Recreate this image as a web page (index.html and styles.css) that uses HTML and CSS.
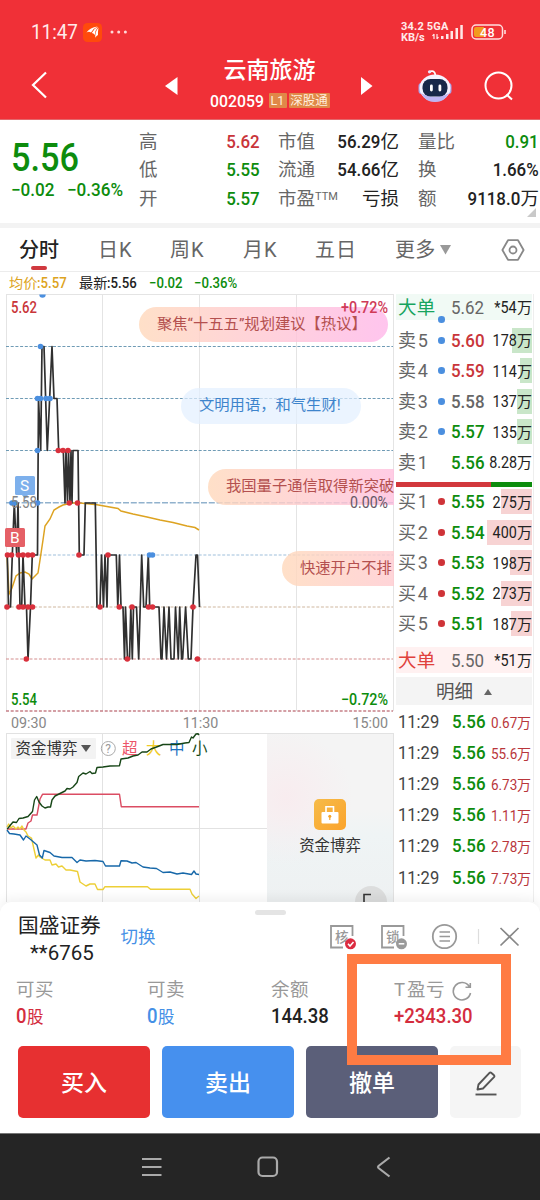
FILE: index.html
```html
<!DOCTYPE html>
<html lang="zh-CN">
<head>
<meta charset="utf-8">
<title>云南旅游 002059</title>
<link rel="stylesheet" href="styles.css">
</head>
<body>
<div class="app">
  <header class="top">
    <div class="status">
      <span class="clock num">11:47</span>
      <svg class="appicon" width="19" height="19" viewBox="0 0 19 19"><rect width="19" height="19" rx="4.5" fill="#ff4a0c"/><path d="M3.500 9.500Q7 4.500 14.500 3.500Q10 5.500 8 9.500Q6 7.800 3.500 9.500M8.800 10Q11 5.500 15 3.800Q12 7.500 11.800 12Q10.500 10 8.800 10M12.300 14.800Q11.800 9 15.500 4.500Q14.800 9 15 12Q13.500 12.500 12.300 14.800" fill="#fff"/></svg>
      <svg class="more" width="18" height="4" viewBox="0 0 18 4" fill="#ffd9d9"><circle cx="2" cy="2" r="1.500"/><circle cx="8.700" cy="2" r="1.500"/><circle cx="15.400" cy="2" r="1.500"/></svg>
      <div class="net"><div>34.2 5GA</div><div>KB/s</div></div>
      <svg class="signal" width="32" height="16" viewBox="0 0 32 16" fill="#ffe6e6"><path d="M2 10v5M5 10v5M0.500 12l1.500-2M6.500 13l-1.500 2" stroke="#ffe6e6" stroke-width="1.200"/><rect x="9" y="12" width="2.500" height="3"/><rect x="14" y="10" width="2.500" height="5"/><rect x="18.500" y="7" width="2.500" height="8"/><rect x="23.500" y="4" width="2.500" height="11"/><rect x="28.300" y="1" width="2.500" height="14"/></svg>
      <svg class="battery" width="36" height="16" viewBox="0 0 36 16"><rect x="1" y="1" width="30.500" height="14" rx="4" fill="none" stroke="#ffdede" stroke-width="1.500"/><path d="M5 3h8v10H5a2 2 0 0 1-2-2V5a2 2 0 0 1 2-2" fill="#f29a1d"/><path d="M34 6v4" stroke="#ffdede" stroke-width="1.600"/><text x="9" y="12.500" font-size="12.500" font-weight="500" fill="#fff" textLength="14.500">48</text></svg>
    </div>
    <div class="titlebar">
      <svg class="ic-back" width="16" height="28" viewBox="0 0 16 28" fill="none" stroke="#fff" stroke-width="2.200"><path d="M15 1.500 2 14 15 26.500"/></svg>
      <svg class="ic-prev" width="13" height="18" viewBox="0 0 13 18"><path d="M12.500 0V18L0 9Z" fill="#fff"/></svg>
      <div class="title">
        <h1>云南旅游</h1>
        <div class="code"><span class="num">002059</span><b class="l1">L1</b><b class="sgt">深股通</b></div>
      </div>
      <svg class="ic-next" width="12" height="18" viewBox="0 0 12 18"><path d="M0 0V18L11.500 9Z" fill="#fff"/></svg>
      <svg class="ic-bot" width="36" height="34" viewBox="0 0 36 34"><path d="M12 3q6-3 6.500 4" fill="none" stroke="#fff" stroke-width="1.800"/><circle cx="12.500" cy="2.800" r="1.600" fill="#e9e6ff"/><rect x="1.500" y="14" width="6" height="11" rx="3" fill="#a9a4ea"/><rect x="28.500" y="14" width="6" height="11" rx="3" fill="#a9a4ea"/><ellipse cx="18" cy="19" rx="15.500" ry="13.500" fill="#f5f3ff"/><path d="M4 24q14 8 28 0-4 9-14 9T4 24" fill="#bdb5f3"/><rect x="5.500" y="10" width="25" height="17.500" rx="8" fill="#172748"/><rect x="13" y="15.500" width="2.800" height="7" rx="1.400" fill="#fff"/><rect x="21.500" y="15.500" width="2.800" height="7" rx="1.400" fill="#fff"/></svg>
      <svg class="ic-search" width="30" height="30" viewBox="0 0 30 30" fill="none" stroke="#fff" stroke-width="2"><circle cx="14.500" cy="14.500" r="13"/><path d="M22.500 23.500 28 28.500"/></svg>
    </div>
  </header>

  <section class="quote">
    <div class="now">
      <div class="price num">5.56</div>
      <div class="chg"><span class="num">−0.02</span><span class="num">−0.36%</span></div>
    </div>
    <dl class="kv c1"><dt>高</dt><dd class="red"><i>5.62</i></dd><dt>低</dt><dd class="green"><i>5.55</i></dd><dt>开</dt><dd class="green"><i>5.57</i></dd></dl>
    <dl class="kv c2"><dt>市值</dt><dd><i>56.29</i>亿</dd><dt>流通</dt><dd><i>54.66</i>亿</dd><dt>市盈<sup>TTM</sup></dt><dd>亏损</dd></dl>
    <dl class="kv c3"><dt>量比</dt><dd class="green"><i>0.91</i></dd><dt>换</dt><dd><i>1.66%</i></dd><dt>额</dt><dd><i>9118.0</i>万</dd></dl>
    <svg class="corner" width="9" height="9" viewBox="0 0 9 9"><path d="M9 0V9H0Z" fill="#c9c9c9"/></svg>
  </section>

  <nav class="tabs">
    <span class="on">分时</span><span>日K</span><span>周K</span><span>月K</span><span>五日</span>
    <span class="drop">更多<svg width="11" height="10" viewBox="0 0 11 10"><path d="M0 0H11L5.500 9.500Z" fill="#999"/></svg></span>
    <svg class="gear" width="24" height="22" viewBox="0 0 24 22" fill="none" stroke="#888" stroke-width="1.800"><path d="M7 1.200H17L22.600 11 17 20.800H7L1.400 11Z" stroke-linejoin="round"/><circle cx="12" cy="11" r="3.500"/></svg>
  </nav>

  <div class="info">
    <span class="avg">均价<i>:5.57</i></span><span class="last">最新<i>:5.56</i></span><span class="green d1"><i>−0.02</i></span><span class="green"><i>−0.36%</i></span>
  </div>

  <main class="body">
    <div class="charts">
      <div class="main-chart">
        <svg width="394" height="418" viewBox="0 294 394 418">
          <g stroke="#e4e4e4" fill="none"><path d="M6 294.500H394M6.500 294V711M102.500 294V711M199.500 294V711M296.500 294V711M393.500 294V711"/></g>
          <g stroke-dasharray="3 1.700" stroke-width="1.200" fill="none">
            <path d="M6 346.500H393M6 398.500H393M6 450.500H393" stroke="#6f9bb5"/>
            <path d="M6 502.800H393" stroke="#91b2cd" stroke-width="1.600" stroke-dasharray="6 1.800"/>
            <path d="M6 555H393" stroke="#9fc0dc"/><path d="M6 607H393" stroke="#cfb79f"/>
            <path d="M6 659H393" stroke="#d48e8e"/><path d="M6 711H393" stroke="#c68088" stroke-width="1.600"/>
          </g>
          <path d="M7 555 9 594 12 588 16 576 20 573 25 572 29 574 32 579 35 576 38 573 40 560 43 540 45 526 50 519 54 510 59 507 63 505 72 503 80 503 97 504.700 118 508.500 121 511 133 514 147 517 160 520 173 522.500 187 526 195 527.500 199 530" fill="none" stroke="#dda321" stroke-width="1.500"/>
          <path d="M7.300 555 8.500 607H10.500L12.300 555 14.300 503 16.700 555 18 503 20 607H21.700L23 555 25 607H26.500L28 659 30.500 607 32.300 555H37.500L38.500 398.500 40.700 450.500 42 346.500H44L47.300 450.500 52 346.500 54 398.500H57L58.700 450.500H63.300L65 503 66 450.500 67.500 503 68.500 450.500 70 503 71 450.500 72 503 73 450.500H78L79.300 555H84L85.300 503H95.300L97 607H100L101.500 555 103.500 607 105 555 107 607 108 555H116.300L117.800 607 119.500 555 121 607H123L124.500 659 125.500 607 127.500 659H129.500L130.800 607 132.300 659 133.500 607H136.500L138.700 659 141.700 555 143.700 607H146L148.300 555 149.700 607H159L161 659H162L164 607 166.500 659 169 607 171 659H174L175.500 607 178.300 659 179.700 607 181.600 659H182.600L185.600 607 188.300 659H191L193 607 196 555H197.500L199.500 607" fill="none" stroke="#303030" stroke-width="1.700" stroke-linejoin="round"/>
          <g fill="#4b8fdf"><path d="M39.300 294.500h6.400a3.200 3.200 0 0 1-6.400 0"/><circle cx="40.500" cy="346.500" r="2.800"/><circle cx="37.500" cy="398.500" r="2.800"/><circle cx="40.500" cy="398.500" r="2.800"/><circle cx="46" cy="398.500" r="2.800"/><circle cx="50" cy="398.500" r="2.800"/><circle cx="37.500" cy="450.500" r="2.800"/><circle cx="12" cy="503" r="2.800"/><circle cx="15" cy="503" r="2.800"/><circle cx="37.500" cy="503" r="2.800"/><circle cx="149.500" cy="555" r="2.800"/><circle cx="152.500" cy="555" r="2.800"/></g>
          <g fill="#d9303c"><circle cx="58.300" cy="450.500" r="2.800"/><circle cx="63" cy="450.500" r="2.800"/><circle cx="68" cy="450.500" r="2.800"/><circle cx="69.300" cy="503" r="2.800"/><circle cx="77.500" cy="503" r="2.800"/><circle cx="79" cy="555" r="2.800"/><circle cx="7.500" cy="555" r="2.800"/><circle cx="11.500" cy="555" r="2.800"/><circle cx="18.500" cy="555" r="2.800"/><circle cx="23" cy="555" r="2.800"/><circle cx="28" cy="555" r="2.800"/><circle cx="32.500" cy="555" r="2.800"/><circle cx="108" cy="555" r="2.800"/><circle cx="7" cy="607" r="2.800"/><circle cx="19" cy="607" r="2.800"/><circle cx="23" cy="607" r="2.800"/><circle cx="28" cy="607" r="2.800"/><circle cx="32.500" cy="607" r="2.800"/><circle cx="100" cy="607" r="2.800"/><circle cx="119.300" cy="607" r="2.800"/><circle cx="132" cy="607" r="2.800"/><circle cx="148.500" cy="607" r="2.800"/><circle cx="152.500" cy="607" r="2.800"/><circle cx="193" cy="607" r="2.800"/><circle cx="26.300" cy="659" r="2.800"/><circle cx="127.300" cy="659" r="2.800"/><circle cx="197.500" cy="659" r="2.800"/></g>
        </svg>
        <div class="pill p1">聚焦“十五五”规划建议【热议】</div>
        <div class="pill p2">文明用语，和气生财!</div>
        <div class="pill p3">我国量子通信取得新突破</div>
        <div class="pill p4">快速开户不排</div>
        <svg class="labels" width="394" height="418" viewBox="0 294 394 418" font-size="16" font-weight="500">
          <path d="M16.500 476h17a1.500 1.500 0 0 1 1.500 1.500v16a1.500 1.500 0 0 1-1.500 1.500h-5.500l-3 4-3-4h-5.500a1.500 1.500 0 0 1-1.500-1.500v-16a1.500 1.500 0 0 1 1.500-1.500" fill="#7db0ec"/><text x="20" y="491.300" font-size="15.500" fill="#fff" font-weight="400">S</text>
          <rect x="5" y="528" width="20" height="19" rx="1.500" fill="#e56066"/><text x="10" y="543" font-size="15.500" fill="#fff" font-weight="400">B</text>
          <text x="11" y="312.800" textLength="26" lengthAdjust="spacingAndGlyphs" fill="#c9353a">5.62</text>
          <text x="341" y="312.800" textLength="47" lengthAdjust="spacingAndGlyphs" fill="#d03a58">+0.72%</text>
          <text x="11" y="507.800" textLength="26" lengthAdjust="spacingAndGlyphs" fill="#858585" font-weight="400">5.58</text>
          <text x="350" y="507.800" textLength="38" lengthAdjust="spacingAndGlyphs" fill="#675866" font-weight="400">0.00%</text>
          <text x="11" y="704.800" textLength="26" lengthAdjust="spacingAndGlyphs" fill="#0d8c0d">5.54</text>
          <text x="341" y="704.800" textLength="47" lengthAdjust="spacingAndGlyphs" fill="#0d8c0d">−0.72%</text>
        </svg>
      </div>
      <div class="axis"><span>09:30</span><span>11:30</span><span>15:00</span></div>
      <div class="sub-chart">
        <svg width="394" height="169" viewBox="0 733 394 169" fill="none">
          <path d="M6 733.500H394M6.500 733V902M102.500 733V902M199.500 733V902M6 828.500H267M393.500 733V902" stroke="#e2e2e2"/>
          <rect x="11" y="738" width="85" height="21" rx="1" fill="#f3f3f3"/>
          <g font-size="15.500"><text x="15.500" y="754" fill="#333" textLength="62">资金博弈</text><path d="M81 745h10l-5 7Z" fill="#555"/><circle cx="108.300" cy="748.500" r="7" stroke="#aaa"/><text x="105.200" y="753" font-size="12" fill="#999">?</text>
          <text x="122" y="754" fill="#ec5468">超</text><text x="146" y="754" fill="#f0cb28">大</text><text x="169" y="754" fill="#1d72bf">中</text><text x="192" y="754" fill="#164a18">小</text></g>
          <g stroke-width="1.400" stroke-linejoin="round">
            <path d="M7 829H26L28 823 31 821 32.500 815H37L40 799 42.500 794.300H119.500L121.300 806.700H199" stroke="#db4d63"/>
            <path d="M7 827 8.700 824 11 828 13 826 16 829 18 827 20 829 22 826 24 830 26 832 28 836 31.500 838 33.500 847 36 858 38.500 855 40 857 45 860H50L52 865 56 864 58.500 867 62 866 66 870 70 870 77.500 871.500 80 882 83 884 86 886 90 884 95 884 97.500 889.500H103L105 886.700H147.500L150.500 889.300H190L192 894 196 898.500 199 896" stroke="#edcf37"/>
            <path d="M7 830 9.500 833.500 14 834 20 835 23.500 840 26 836 30 839 33.500 842 37 845 39.500 855 42.300 858 44 850.500 50 852.500 54 856 62 857.500 72 857.500 77 862.500 80 860 86 861 95 860.500 103 861.500 105.500 866H119.500L121 860.700 127 861 132 863 136 862.500 143 867 150 868 156.500 868.500 163 872.500 170 872 177 874 183 873 191.500 874.500 194 871 196 874 199 874.500" stroke="#1768a9"/>
            <path d="M7.300 829 10.500 825 13 822 16.500 822.500 19 818.500 23 818 28 816.500 32.500 811.500 34.500 800 36.700 796.500 39 802 42 806 45 808 48 807 50.500 807 52 800 55 796 60 793.500 65 791 67 788.500 70 789 73 787 77 782.500 78.700 776.500 83 773 86 774 90 771.500 92 773.500 95.500 773 97 767.500 103 767 110 766 119.500 765.700 121 759 128 758 133 756 138 755 142 752 147 752 151 749 156.500 747 163 744.500 177 744.500 185 743 189 742.500 191.500 737 193 738 196 734 198 733.700 199 735" stroke="#174617"/>
          </g>
        </svg>
        <div class="locked">
          <svg width="32" height="31" viewBox="0 0 32 31"><defs><linearGradient id="gold" x2="1" y2="1"><stop stop-color="#f6bb49"/><stop offset="1" stop-color="#fba32b"/></linearGradient></defs><rect width="32" height="31" rx="5" fill="url(#gold)"/><path d="M12 14V7.800h7.500V14" fill="none" stroke="#fff" stroke-width="1.600"/><rect x="7.500" y="13" width="17" height="11.500" rx="1" fill="#fff"/><circle cx="15.800" cy="17.200" r="1.500" fill="#f5a52d"/><path d="M15.800 17v4" stroke="#f5a52d" stroke-width="1.200"/></svg>
          <span>资金博弈</span>
          <svg class="expand" width="32" height="16" viewBox="0 0 32 16"><circle cx="16" cy="16" r="16" fill="#dcdddd"/><path d="M9 16V8.500H16" fill="none" stroke="#333" stroke-width="1.600"/></svg>
        </div>
      </div>
    </div>

    <aside class="book">
      <div class="big g"><b>大单</b><em>5.62</em><span><i>*54</i>万</span></div>
      <div class="row"><b>卖5</b><u class="bl"></u><em class="red">5.60</em><span><s class="s5"></s><i>178</i>万</span></div>
      <div class="row"><b>卖4</b><u class="bl"></u><em class="red">5.59</em><span><s class="s4"></s><i>114</i>万</span></div>
      <div class="row"><b>卖3</b><u class="bl"></u><em>5.58</em><span><s class="s3"></s><i>137</i>万</span></div>
      <div class="row"><b>卖2</b><u class="bl"></u><em class="green">5.57</em><span><s class="s2"></s><i>135</i>万</span></div>
      <div class="row"><b>卖1</b><u></u><em class="green">5.56</em><span><i>8.28</i>万</span></div>
      <div class="ratio"></div>
      <div class="row"><b>买1</b><u class="rd"></u><em class="green">5.55</em><span><s class="b1"></s><i>275</i>万</span></div>
      <div class="row"><b>买2</b><u class="rd"></u><em class="green">5.54</em><span><s class="b2"></s><i>400</i>万</span></div>
      <div class="row"><b>买3</b><u class="rd"></u><em class="green">5.53</em><span><s class="b3"></s><i>198</i>万</span></div>
      <div class="row"><b>买4</b><u class="rd"></u><em class="green">5.52</em><span><s class="b4"></s><i>273</i>万</span></div>
      <div class="row"><b>买5</b><u class="rd"></u><em class="green">5.51</em><span><s class="b5"></s><i>187</i>万</span></div>
      <div class="big r"><b>大单</b><em>5.50</em><span><i>*51</i>万</span></div>
      <div class="detail">明细<svg width="8" height="6" viewBox="0 0 8 6"><path d="M4 0 8 6H0Z" fill="#666"/></svg></div>
      <div class="tick"><time>11:29</time><em>5.56</em><span><i>0.67</i>万</span></div>
      <div class="tick"><time>11:29</time><em>5.56</em><span><i>55.6</i>万</span></div>
      <div class="tick"><time>11:29</time><em>5.56</em><span><i>6.73</i>万</span></div>
      <div class="tick"><time>11:29</time><em>5.56</em><span><i>1.11</i>万</span></div>
      <div class="tick"><time>11:29</time><em>5.56</em><span><i>2.78</i>万</span></div>
      <div class="tick"><time>11:29</time><em>5.56</em><span><i>7.73</i>万</span></div>
      <div class="tick"><time>11:29</time><em>5.56</em></div>
    </aside>
  </main>

  <section class="sheet">
    <div class="grab"></div>
    <div class="account">
      <div class="acc"><div>国盛证券</div><div class="no">**6765</div></div>
      <a>切换</a>
      <svg class="tools" width="192" height="28" viewBox="328 922 192 28" fill="none" stroke="#999" stroke-width="1.800">
        <path d="M352.500 936V926H331V947.500H343M403.500 936V926H382V947.500H394"/>
        <g stroke="none" fill="#999" font-size="13.500" font-weight="500"><text x="335" y="941.500">核</text><text x="386" y="941.500">锁</text></g>
        <circle cx="350.500" cy="943.800" r="5.500" fill="#dc2b40" stroke="none"/><path d="M348 943.800 350 946 353.500 942" stroke="#fff" stroke-width="1.500"/>
        <circle cx="401.500" cy="943.800" r="5.500" fill="#999" stroke="none"/><path d="M398.700 943.800H404.300" stroke="#fff" stroke-width="1.500"/>
        <circle cx="444.500" cy="936.500" r="11.700"/><path d="M439.500 932H450M439.500 936.500H450M439.500 941H450" stroke-width="1.600"/>
        <path d="M478.500 929V944" stroke="#ddd" stroke-width="1.200"/><path d="M500.500 928 518.500 945.500M518.500 928 500.500 945.500" stroke="#888" stroke-width="1.700"/>
      </svg>
    </div>
    <div class="stats">
      <div><label>可买</label><p class="hot"><i>0</i>股</p></div>
      <div><label>可卖</label><p class="blue"><i>0</i>股</p></div>
      <div><label>余额</label><p><i>144.38</i></p></div>
      <div><label><span><span class="tee">T</span>盈亏</span><svg width="20" height="20" viewBox="0 0 20 20" fill="none" stroke="#999" stroke-width="1.600"><path d="M17.300 5.500A8.700 8.700 0 1 0 18.500 12M18.300 2V6.300H13.500"/></svg></label><p class="hot"><i>+2343.30</i></p></div>
    </div>
    <div class="btns">
      <button class="buy">买入</button><button class="sell">卖出</button><button class="cancel">撤单</button>
      <button class="edit"><svg width="22" height="25" viewBox="0 0 22 25" fill="none" stroke="#555" stroke-width="1.900" stroke-linejoin="round"><path d="M2.500 18.500 3.500 13.500 14.500 1.800Q15.500 1 16.500 2L19 4.300Q19.800 5.200 19 6.200L8 17.500Z"/><path d="M.5 23.500H21.500"/></svg></button>
    </div>
    <div class="marker"></div>
  </section>

  <footer class="sysnav">
    <svg width="540" height="66" viewBox="0 1134 540 66" fill="none" stroke="#aaa" stroke-width="2.200"><path d="M142 1159H161.500M142 1167H161.500M142 1175H161.500"/><rect x="258.500" y="1157.500" width="18.500" height="18.500" rx="4"/><path d="M389.500 1157.500 378.500 1166Q377.500 1167 378.500 1168L389.500 1176.500"/></svg>
  </footer>
</div>
</body>
</html>
```

FILE: styles.css
```css
* { box-sizing: border-box; }
html, body { margin: 0; padding: 0; }
body {
  font-family: Roboto, "Noto Sans CJK SC", sans-serif;
  width: 540px;
  height: 1200px;
  overflow: hidden;
  background: #fff;
  color: #222;
}
svg { display: block; flex: none; }
i, em, b { font-style: normal; }
u, s { text-decoration: none; }
.red { color: #c9353a; }
.green { color: #0d8c0d; }

/* Narrow numerals */
.num, i { display: inline-block; transform: scaleX(.89); transform-origin: left center; font-weight: 500; }

.app { width: 540px; height: 1200px; display: flex; flex-direction: column; }

/* Header */
.top { height: 120px; flex: none; background: #f03037; color: #fff; border-bottom: 1px solid #e3686c; }
.status { height: 56px; padding: 8px 0 0 31px; display: flex; align-items: center; }
.clock { width: 52px; font-size: 20px; line-height: 48px; color: #ffeaea; font-weight: 400; transform: scaleX(.94); }
.more { margin-left: 8px; }
.net { margin-left: 273px; width: 31px; font-size: 11px; font-weight: 700; line-height: 11px; white-space: nowrap; color: #ffeaea; letter-spacing: .2px; }
.net div + div { letter-spacing: 0; }
.battery { margin-left: 7px; }
.titlebar { height: 63px; padding-left: 31px; display: flex; align-items: center; }
.ic-back { margin-bottom: 6px; }
.ic-prev { margin: 0 0 4px 118px; }
.title { width: 183px; display: flex; flex-direction: column; align-items: center; }
.title h1 { margin: 0; font-size: 23px; font-weight: 500; line-height: 30px; }
.code { display: flex; align-items: center; height: 33px; padding: 0 0 4px 0; }
.code .num { font-size: 17px; width: 59px; transform: scaleX(.93); }
.code b { background: #e08848; font-size: 12.500px; line-height: 15px; height: 15px; font-weight: 400; border-radius: 1px; color: #ffeedd; text-align: center; white-space: nowrap; }
.l1 { width: 18px; margin-right: 2px; }
.sgt { width: 41px; }
.ic-next { margin-bottom: 4px; }
.ic-bot { margin: 0 0 4px 44px; }
.ic-search { margin: 0 0 4px 31px; }

/* Quote */
.quote { position: relative; height: 103px; flex: none; display: flex; padding-left: 11px; }
.now { width: 128px; color: #0d8c0d; }
.price { font-size: 39px; line-height: 44px; margin-top: 16px; transform: scaleX(.88); }
.chg { display: flex; line-height: 22px; font-size: 18px; margin-top: -1px; }
.chg .num { width: 56px; font-weight: 500; transform: scaleX(.95); }
.kv { margin: 7.500px 0 0; display: grid; grid-template-columns: auto 1fr; grid-auto-rows: 28.500px; line-height: 28.500px; font-size: 18.500px; white-space: nowrap; }
.kv dt { color: #666; }
.kv dd { margin: 0; text-align: right; color: #222; }
.kv dd.red { color: #c9353a; }
.kv dd.green { color: #0d8c0d; }
.kv i { transform-origin: right center; font-size: 19px; }
.kv sup { font-size: 11px; line-height: 1; vertical-align: 5px; }
.c1 { width: 121px; }
.c2 { width: 121px; margin-left: 18px; padding-right: 0; }
.c2 { width: 122px; grid-template-columns: 63px 58px; }
.c2 dd { display: flex; justify-content: flex-end; }
.c3 { width: 121px; margin-left: 18px; }
.corner { position: absolute; right: 4px; bottom: 6px; }

/* Tabs */
.tabs { position: relative; border-top: 5px solid #f3f3f3; border-bottom: 1px solid #ececec; height: 49px; flex: none; padding-left: 19px; display: grid; grid-template-columns: 79px 72px 73px 72px 80px 106px auto; line-height: 42px; font-size: 20px; color: #666; align-items: center; }
.tabs span { display: flex; align-items: center; letter-spacing: 1px; height: 43px; }
.tabs .drop { gap: 5px; letter-spacing: .2px; }
.tabs .on { color: #222; font-weight: 500; letter-spacing: 0; position: relative; }
.tabs .on::after { content: ""; position: absolute; left: 12px; bottom: 1px; width: 16px; height: 4px; border-radius: 2px; background: #d0393f; }

.info { height: 22px; flex: none; padding-left: 9px; display: flex; font-size: 14.200px; line-height: 23px; }
.info i { font-size: 14.500px; transform: scaleX(.91); }
.avg { width: 70px; color: #dda321; }
.last { width: 70px; }
.d1 { width: 45px; }

/* Body */
.body { display: flex; height: 608px; flex: none; overflow: hidden; }
.charts { width: 394px; flex: none; }
.main-chart { position: relative; height: 418px; overflow: hidden; }
.labels { position: absolute; left: 0; top: 0; }
.pill { position: absolute; height: 35.500px; line-height: 35px; border-radius: 18px; padding-left: 18px; font-size: 15.300px; color: #b4504f; white-space: nowrap; overflow: hidden; background: linear-gradient(90deg, rgba(255,217,188,.82), rgba(255,184,234,.82)); }
.p1 { left: 139px; top: 12.500px; width: 249px; }
.p2 { left: 181px; top: 94px; width: 180px; background: rgba(226,239,255,.7); color: #3e84cc; }
.p3 { left: 208px; top: 175px; width: 249px; }
.p4 { left: 282px; top: 256.500px; width: 260px; }
.axis { height: 21px; padding: 0 6px 0 11px; display: flex; justify-content: space-between; color: #888; font-size: 14.300px; line-height: 23px; }
.axis span:nth-child(2) { margin-left: 2px; }
.sub-chart { position: relative; height: 169px; }
.locked { position: absolute; left: 267px; top: 1px; width: 126px; height: 168px; padding-top: 65px; display: flex; flex-direction: column; align-items: center; font-size: 15.400px; background: radial-gradient(circle at 15% 38%, #f8ecef, transparent 45%), linear-gradient(#f4f4f4 45%, #eff4f5 60%, #eef1f2); color: #333; }
.locked span { line-height: 24px; margin-top: 4px; }
.expand { position: absolute; right: 6px; bottom: 0; }

/* Order book */
.book { width: 140px; border-right: 1px solid #eee; padding-left: 2px; flex: none; white-space: nowrap; overflow: hidden; }
.row, .big, .tick { display: flex; align-items: center; padding-left: 2px; }
.book b { font-weight: 400; font-size: 18px; color: #666; width: 40px; letter-spacing: 1.700px; padding-top: 1px; }
.book em { font-size: 18.800px; width: 38px; font-weight: 500; transform: scaleX(.9); transform-origin: left center; color: #666; padding-top: 1px; }
.book em.green, .tick em { color: #0d8c0d !important; }
.book em.red { color: #c9353a; }
.book span { margin-left: auto; font-size: 15px; width: 42px; text-align: right; margin-right: 1px; color: #222; position: relative; display: flex; justify-content: flex-end; align-items: center; font-weight: 400; padding-top: 2px; }
.book span i { font-size: 16.500px; transform-origin: right center; transform: scaleX(.87); position: relative; font-weight: 400; }
.row { height: 30.500px; line-height: 30.500px; }
.row span { height: 30.500px; z-index: 0; }
.row s { position: absolute; right: 0; top: 2.500px; height: 25px; z-index: -1; }
.row u { width: 6.600px; height: 6.600px; border-radius: 50%; margin: 0 6px 0 0; }
.bl { background: #4b8fdf; }
.rd { background: #cf3338; }
.big { height: 26px; line-height: 26px; margin-right: 1px; }
.big span { margin-right: 0; }
.big b { width: 52.600px; letter-spacing: .3px; font-size: 18.500px; }
.big.g { background: #f1faf5; margin-bottom: 5px; position: relative; }
.big.g b { color: #17a45e; }
.big.g::after { content: ""; position: absolute; left: 42px; top: 22px; width: 6.600px; height: 6.600px; border-radius: 50%; background: #4b8fdf; }
.big.r { background: #fff1f1; margin-top: 8px; }
.big.r b { color: #e0413c; }
.big em { font-weight: 400; }
.s5 { width: 20px; } .s4 { width: 12px; } .s3 { width: 15px; } .s2 { width: 15px; }
.s5, .s4, .s3, .s2 { background: #c9e6c9; }
.b1 { width: 31px; } .b2 { width: 45px; } .b3 { width: 22px; } .b4 { width: 31px; } .b5 { width: 21px; }
.b1, .b2, .b3, .b4, .b5 { background: #f7d3d3; }
.ratio { height: 5px; margin: 4px 1px 0 0; background: linear-gradient(90deg, #d2383c 70%, #0d8c0d 70%); }
.detail { height: 28px; margin: 4px 1px 1.500px 0; padding-top: 2px; background: #f4f4f4; color: #555; font-size: 18.500px; display: flex; align-items: center; justify-content: center; gap: 11px; line-height: 26px; }
.tick { height: 31.100px; line-height: 30px; }
.tick time { font-size: 18px; width: 53.600px; color: #444; transform: scaleX(.92); transform-origin: left center; }
.tick em { width: 35px; padding-top: 0; }
.tick span { color: #b9363b; font-size: 14px; margin-right: 2px; }
.tick span i { font-size: 15.500px; }

/* Trade sheet */
.sheet { position: relative; height: 231px; flex: none; background: #fff; border-radius: 12px 12px 0 0; box-shadow: 0 -4px 12px rgba(0,0,0,.06); padding: 8px 18px 0; }
.grab { width: 31px; height: 5px; border-radius: 3px; background: #e4e4e4; margin: 0 auto; }
.account { display: flex; height: 57px; margin-top: -4px; }
.acc { width: 102.500px; padding-top: 2px; font-size: 20.700px; line-height: 27px; }
.acc .no { padding-left: 12px; font-size: 20.500px; }
.account a { color: #4590e6; font-size: 17.500px; line-height: 53px; margin-right: auto; }
.tools { margin: 11px 2px 0 0; }
.stats { display: grid; grid-template-columns: 131px 124px 123px 1fr; margin: 9px -18px 0 -2px; }
.stats label { display: flex; align-items: center; gap: 7px; font-size: 18.500px; line-height: 27px; height: 27px; color: #999; letter-spacing: .4px; }
.stats label > span { display: flex; }
.tee { width: 13px; }
.stats p { margin: 0; font-size: 16.500px; line-height: 26px; white-space: nowrap; }
.stats p i { font-size: 19.500px; transform: scaleX(.95); }
.hot { color: #d42d3e; }
.blue { color: #4590e6; }
.btns { display: grid; grid-template-columns: repeat(3, 132px) 71px; gap: 12px; margin-top: 15px; }
.btns button { height: 72px; border: 0; border-radius: 5px; padding: 3px 0 0; color: #fff; font: 500 23px/69px Roboto, "Noto Sans CJK SC", sans-serif; display: grid; place-items: center; }
.buy { background: #e73031; }
.sell { background: #4690ee; }
.cancel { background: #5b5f79; }
.btns .edit { background: #f5f5f5; }
.marker { position: absolute; left: 347px; top: 52px; width: 164px; height: 111px; border: 10px solid #ff7b43; }

.sysnav { height: 67px; flex: none; background: #252525; border-top: 1px solid #777; }
```
